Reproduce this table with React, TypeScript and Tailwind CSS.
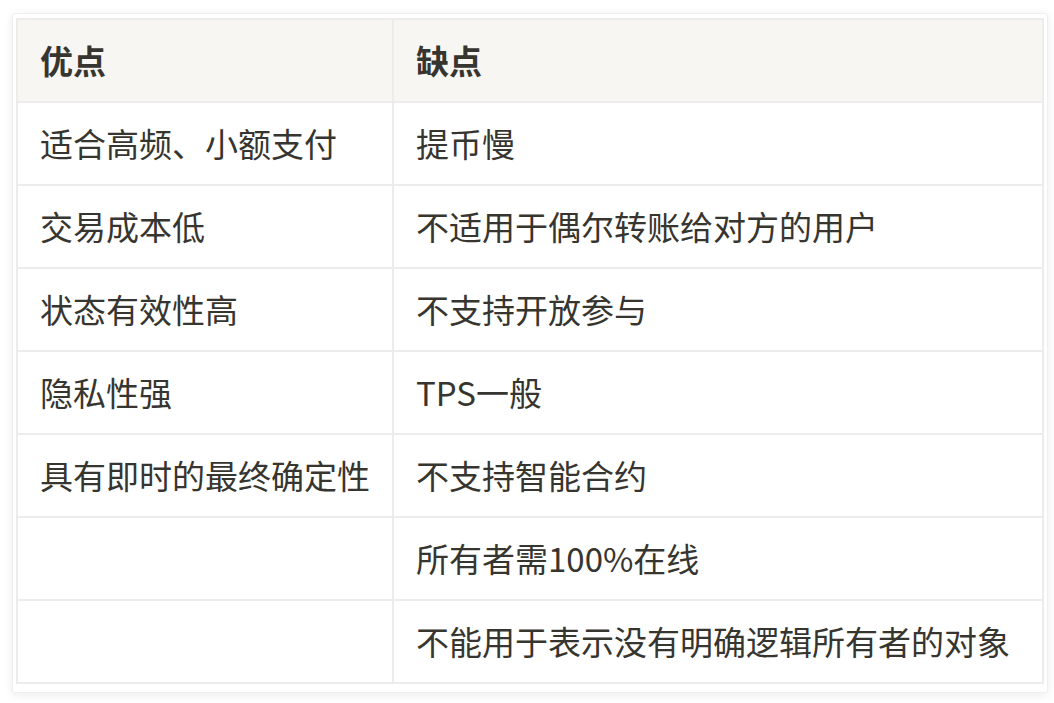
import React from "react";

const rows: [string, string][] = [
  ["适合高频、小额支付", "提币慢"],
  ["交易成本低", "不适用于偶尔转账给对方的用户"],
  ["状态有效性高", "不支持开放参与"],
  ["隐私性强", "TPS一般"],
  ["具有即时的最终确定性", "不支持智能合约"],
  ["", "所有者需100%在线"],
  ["", "不能用于表示没有明确逻辑所有者的对象"],
];

function Cell({
  children,
  header,
  last,
}: {
  children: React.ReactNode;
  header?: boolean;
  last?: boolean;
}) {
  return (
    <div
      className={`flex h-[83px] items-center border-b-2 border-[#ececeb] px-[22px] ${
        last ? "" : "border-r-2"
      } ${header ? "bg-[#f7f6f3] font-semibold" : "bg-white"}`}
    >
      <span className="whitespace-nowrap">{children}</span>
    </div>
  );
}

export default function App() {
  return (
    <div
      className="min-h-[703px] w-[1054px] bg-white pl-[12px] pt-[13px] text-[33px] leading-none text-[#37352f]"
      style={{ fontFamily: '"Noto Sans CJK SC", "Noto Sans", sans-serif' }}
    >
      <div className="w-[1036px] rounded-[3px] border border-[#efefef] bg-white px-[3px] pb-[8px] pt-[4px] shadow-[0_2px_10px_rgba(0,0,0,0.08)]">
        <div className="grid grid-cols-[376px_1fr] border-l-2 border-r-2 border-t-2 border-[#ececeb]">
          <Cell header>优点</Cell>
          <Cell header last>
            缺点
          </Cell>
          {rows.map(([a, b], i) => (
            <React.Fragment key={i}>
              <Cell>{a}</Cell>
              <Cell last>{b}</Cell>
            </React.Fragment>
          ))}
        </div>
      </div>
    </div>
  );
}
